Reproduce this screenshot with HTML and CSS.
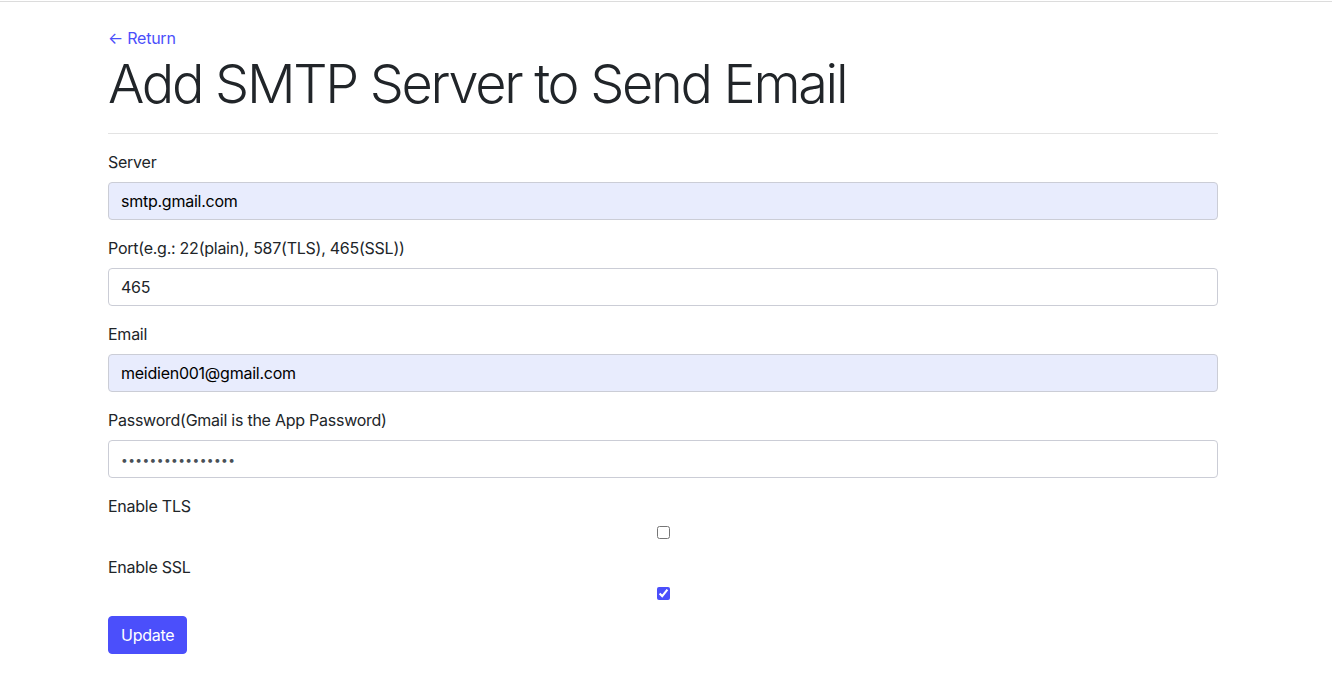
FILE: index.html
```html
<!DOCTYPE html>
<html lang="en">
<head>
<meta charset="utf-8">
<title>Add SMTP Server</title>
<link rel="stylesheet" href="styles.css">
</head>
<body>
<div class="topbar"></div>
<main class="container">
  <a class="back" href="#">← Return</a>
  <h1 class="title">Add SMTP Server to Send Email</h1>
  <hr class="rule">
  <form class="form">
    <div class="group">
      <label class="label" for="server">Server</label>
      <input class="field autofill" id="server" type="text" value="smtp.gmail.com">
    </div>
    <div class="group">
      <label class="label" for="port">Port(e.g.: 22(plain), 587(TLS), 465(SSL))</label>
      <input class="field" id="port" type="text" value="465">
    </div>
    <div class="group">
      <label class="label" for="email">Email</label>
      <input class="field autofill" id="email" type="text" value="meidien001@gmail.com">
    </div>
    <div class="group">
      <label class="label" for="pw">Password(Gmail is the App Password)</label>
      <input class="field pw" id="pw" type="password" value="abcdefghijklmnop">
    </div>
    <div class="group">
      <label class="label" for="tls">Enable TLS</label>
      <input class="check" id="tls" type="checkbox">
    </div>
    <div class="group">
      <label class="label" for="ssl">Enable SSL</label>
      <input class="check" id="ssl" type="checkbox" checked>
    </div>
    <button class="btn" type="button">Update</button>
  </form>
</main>
</body>
</html>
```
FILE: styles.css
```css
* { box-sizing: border-box; }
html, body { margin: 0; padding: 0; background: #fff; }
body {
  font-family: Inter, "Noto Sans", "Liberation Sans", sans-serif;
  font-size: 16px;
  line-height: 24px;
  letter-spacing: -0.25px;
  color: #212529;
}
.topbar {
  height: 2px;
  border-bottom: 1px solid #dcdcdc;
}
.container {
  width: 1110px;
  margin: 0 0 0 108px;
  padding-top: 24px;
}
.back {
  display: block;
  color: #4b4ffb;
  text-decoration: none;
  font-size: 16px;
  line-height: 24px;
}
.title {
  margin: 0;
  font-size: 54px;
  font-weight: 300;
  line-height: 67px;
  letter-spacing: -2.3px;
  color: #212529;
}
.rule {
  margin: 16px 0;
  border: 0;
  border-top: 1px solid #e3e3e3;
}
.form { display: flex; flex-direction: column; align-items: flex-start; }
.group {
  display: flex;
  flex-direction: column;
  width: 100%;
  margin-bottom: 16px;
}
.label {
  display: block;
  margin-bottom: 8px;
  line-height: 24px;
}
.field {
  display: block;
  width: 100%;
  height: 38px;
  padding: 6px 12px;
  font-family: inherit;
  font-size: 16px;
  letter-spacing: -0.25px;
  color: #212529;
  background: #fff;
  border: 1px solid #cbcdd6;
  border-radius: 4px;
  outline: none;
}
.field.autofill {
  background: #e8ecfd;
  color: #000;
}
.field.pw {
  font-size: 12px;
  letter-spacing: 0.4px;
  color: #495057;
}
.check {
  display: block;
  width: 13px;
  height: 13px;
  margin: 0 auto;
  accent-color: #4b4ffb;
}
.btn {
  height: 38px;
  padding: 6px 12px;
  font-family: inherit;
  font-size: 16px;
  line-height: 24px;
  letter-spacing: -0.25px;
  color: #fff;
  background: #4b4ffb;
  border: 1px solid #4b4ffb;
  border-radius: 4px;
  cursor: pointer;
}
```
